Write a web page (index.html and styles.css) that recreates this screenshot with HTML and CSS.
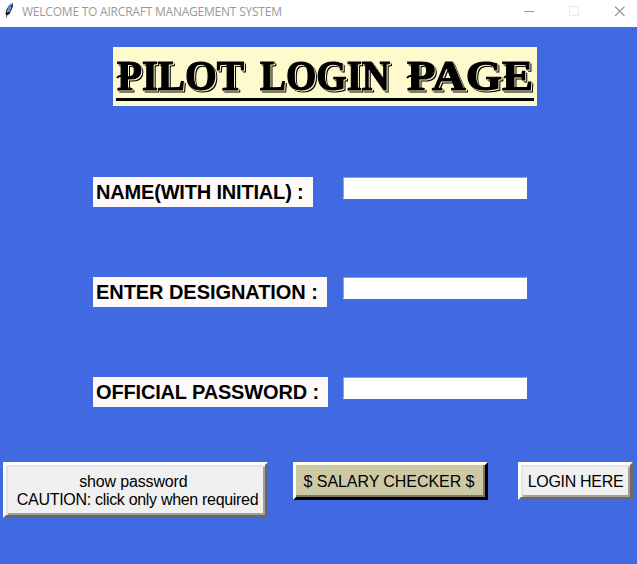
FILE: index.html
```html
<!DOCTYPE html>
<html lang="en">
<head>
<meta charset="utf-8">
<title>WELCOME TO AIRCRAFT MANAGEMENT SYSTEM</title>
<link rel="stylesheet" href="styles.css">
</head>
<body>
<header class="titlebar">
  <svg class="feather" width="12" height="18" viewBox="0 0 12 18"><path d="M9.500 1L6 3.500 3.500 7.500 2.500 12l1 1-.4 4L4.500 13l2-1 2-4L10 4z" fill="#111"/><path d="M8.700 2.500L6 5.500 4.300 10.500M8.200 5L6 10" stroke="#5b9cee" stroke-width="1.500" fill="none"/></svg>
  <span class="caption">WELCOME TO AIRCRAFT MANAGEMENT SYSTEM</span>
  <svg class="controls" width="104" height="12" viewBox="0 0 104 12" fill="none"><path d="M0 6.500H10" stroke="#999"/><rect x="45.500" y="1.500" width="9" height="9" stroke="#e9e9e9"/><path d="M91 1.500L100.500 11M100.500 1.500L91 11" stroke="#999" stroke-width="1.200"/></svg>
</header>
<main>
  <h1 class="banner">
    <svg width="424" height="59" viewBox="0 0 424 59">
      <g class="letters">
        <text x="4" y="43" textLength="127" lengthAdjust="spacingAndGlyphs">PILOT</text>
        <text x="147" y="43" textLength="130" lengthAdjust="spacingAndGlyphs">LOGIN</text>
        <text x="294" y="43" textLength="126" lengthAdjust="spacingAndGlyphs">PAGE</text>
      </g>
      <g class="swashes">
        <path d="M4 31q2-3 6-2h4"/>
        <path d="M294 31q2-3 6-2h4"/>
        <path d="M391 31q2-3 6-2h4"/>
      </g>
      <path d="M3 52.500H421" stroke="#000" stroke-width="3"/>
    </svg>
  </h1>
  <form class="fields">
    <div class="row"><label class="name" for="n">NAME(WITH INITIAL) :</label><input id="n"></div>
    <div class="row"><label class="designation" for="d">ENTER DESIGNATION :</label><input id="d"></div>
    <div class="row"><label class="password" for="p">OFFICIAL PASSWORD :</label><input id="p" type="password"></div>
  </form>
  <div class="actions">
    <button class="btn show"><span>show password </span>
<span class="caution"> CAUTION: click only when required</span></button>
    <button class="btn salary"><span>$ SALARY CHECKER $</span></button>
    <button class="btn login"><span>LOGIN HERE</span></button>
  </div>
</main>
</body>
</html>
```
FILE: styles.css
```css
* { box-sizing: border-box; }
body { margin: 0; background: #4169e1; font-family: "Liberation Sans", Arial, sans-serif; overflow: hidden; }
.titlebar { height: 27px; background: #fff; display: flex; align-items: flex-start; padding: 2px 9px 0 3px; }
.feather { flex: none; }
.caption { font: 12px/19px "Open Sans", sans-serif; color: #999; margin-left: 7px; letter-spacing: -0.22px; white-space: nowrap; }
.controls { margin: 3px 0 0 auto; flex: none; }
main { height: 537px; padding-top: 20px; }
.banner { margin: 0 0 71px 113px; width: 424px; height: 59px; background: #fffacd; }
.banner svg { display: block; }
.letters { font: bold 43px "Liberation Serif", serif; stroke: #000; stroke-width: 1.2px; filter: drop-shadow(1px 1px 0 #fffacd) drop-shadow(1px 1px 0 #000); }
.swashes { fill: none; stroke: #000; stroke-width: 2px; }
.fields { margin-left: 93px; }
.row { display: grid; grid-template-columns: 250px 184px; height: 100px; align-items: start; justify-items: start; }
.row label { height: 30px; padding-left: 3px; background: #fffafa; color: #000; font-size: 20px; line-height: 30px; font-weight: bold; white-space: nowrap; }
.row .name { width: 220px; letter-spacing: -0.18px; }
.row .designation { width: 234px; letter-spacing: -0.06px; }
.row .password { width: 235px; letter-spacing: -0.16px; }
.row input { width: 184px; height: 22px; border: 1px solid; border-color: #a0a0a0 #fff #fff #a0a0a0; background: #fff; padding: 0; outline: 0; }
.actions { display: flex; align-items: flex-start; margin: -15px 0 0 3px; }
.btn { font: 16px/18px "Liberation Sans", Arial, sans-serif; color: #000; background: #f0f0f0; padding: 2px 0 0; border: 3px solid; border-color: #fff #696969 #696969 #fff; box-shadow: inset 2px 2px #e3e3e3, inset -2px -2px #a0a0a0; height: 38px; white-space: pre; letter-spacing: -0.15px; }
.show { width: 265px; height: 56px; }
.caution { letter-spacing: -0.31px; }
.salary { width: 195px; margin-left: 25px; padding-right: 3px; letter-spacing: -0.06px; background: #cdc9a5; border-color: #fffff0 #000 #000 #fffff0; box-shadow: inset -2px -2px #7b7963; }
.login { width: 115px; margin-left: 30px; letter-spacing: -0.3px; }
```
